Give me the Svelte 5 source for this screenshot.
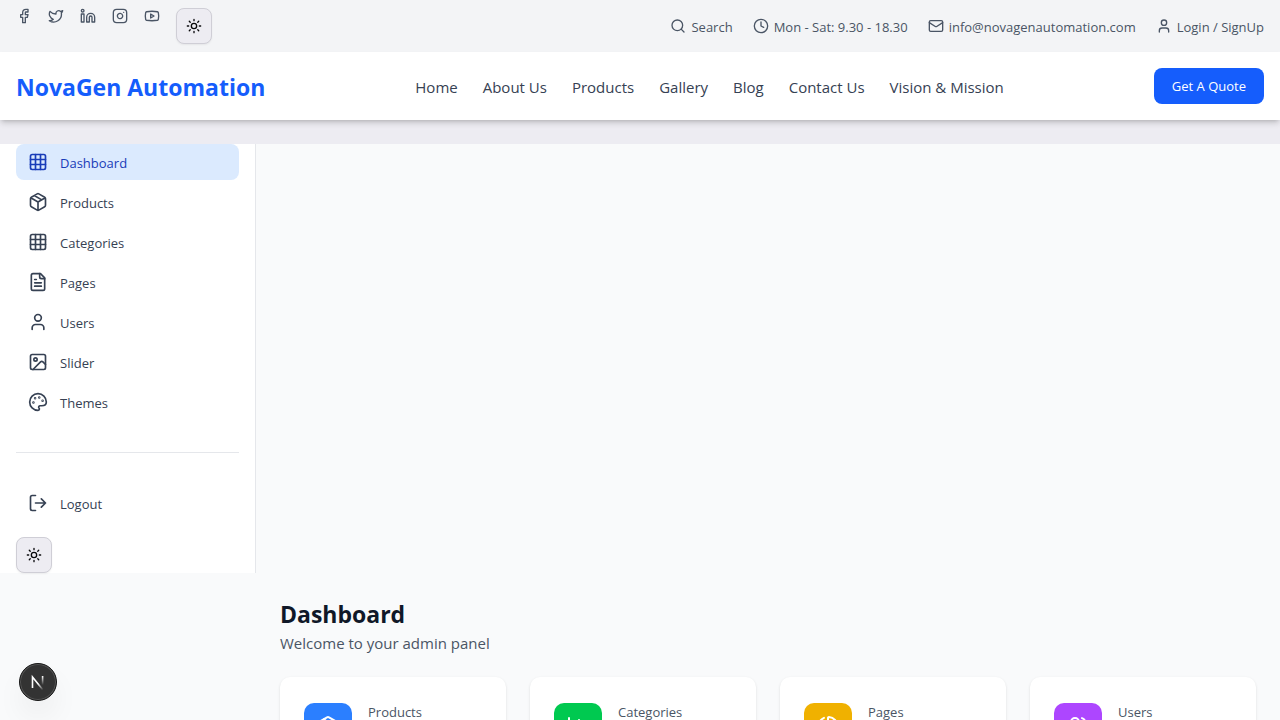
<script>
  const icons = {
    facebook: '<path d="M18 2h-3a5 5 0 0 0-5 5v3H7v4h3v8h4v-8h3l1-4h-4V7a1 1 0 0 1 1-1h3z"/>',
    twitter: '<path d="M22 4s-.7 2.1-2 3.4c1.6 10-9.4 17.3-18 11.6 2.2.1 4.4-.6 6-2C3 15.5.5 9.600 3 5c2.200 2.600 5.600 4.100 9 4-.9-4.200 4-6.600 7-3.800 1.100 0 3-1.200 3-1.200z"/>',
    linkedin: '<path d="M16 8a6 6 0 0 1 6 6v7h-4v-7a2 2 0 0 0-4 0v7h-4v-7a6 6 0 0 1 6-6z"/><rect width="4" height="12" x="2" y="9"/><circle cx="4" cy="4" r="2"/>',
    instagram: '<rect width="20" height="20" x="2" y="2" rx="5"/><path d="M16 11.370A4 4 0 1 1 12.630 8 4 4 0 0 1 16 11.370zM17.500 6.500h.01"/>',
    youtube: '<path d="M2.500 17a24.120 24.120 0 0 1 0-10 2 2 0 0 1 1.400-1.400 49.560 49.560 0 0 1 16.200 0A2 2 0 0 1 21.500 7a24.120 24.120 0 0 1 0 10 2 2 0 0 1-1.400 1.400 49.550 49.550 0 0 1-16.200 0A2 2 0 0 1 2.500 17"/><path d="m10 15 5-3-5-3z"/>',
    sun: '<circle cx="12" cy="12" r="4"/><path d="M12 2v2M12 20v2M4.930 4.930l1.410 1.410M17.660 17.660l1.410 1.410M2 12h2M20 12h2M6.340 17.660l-1.410 1.410M19.070 4.930l-1.410 1.410"/>',
    search: '<circle cx="11" cy="11" r="8"/><path d="m21 21-4.300-4.300"/>',
    clock: '<circle cx="12" cy="12" r="10"/><path d="M12 6v6l4 2"/>',
    mail: '<rect width="20" height="16" x="2" y="4" rx="2"/><path d="m22 7-8.970 5.700a1.940 1.940 0 0 1-2.060 0L2 7"/>',
    user: '<path d="M19 21v-2a4 4 0 0 0-4-4H9a4 4 0 0 0-4 4v2"/><circle cx="12" cy="7" r="4"/>',
    grid: '<rect width="18" height="18" x="3" y="3" rx="2"/><path d="M3 9h18M3 15h18M9 3v18M15 3v18"/>',
    box: '<path d="M11 21.730a2 2 0 0 0 2 0l7-4A2 2 0 0 0 21 16V8a2 2 0 0 0-1-1.730l-7-4a2 2 0 0 0-2 0l-7 4A2 2 0 0 0 3 8v8a2 2 0 0 0 1 1.730zM12 22V12M3.300 7 12 12l8.700-5M7.500 4.270l9 5.150"/>',
    file: '<path d="M15 2H6a2 2 0 0 0-2 2v16a2 2 0 0 0 2 2h12a2 2 0 0 0 2-2V7z"/><path d="M14 2v4a2 2 0 0 0 2 2h4M10 9H8M16 13H8M16 17H8"/>',
    image: '<rect width="18" height="18" x="3" y="3" rx="2"/><circle cx="9" cy="9" r="2"/><path d="m21 15-3.090-3.090a2 2 0 0 0-2.820 0L6 21"/>',
    palette: '<path d="M12 22a10 10 0 1 1 10-10c0 3.100-2.500 4.500-5.500 4.500h-2a1.700 1.700 0 0 0-1.300 2.800c.3.300.5.700.5 1.200 0 .9-.7 1.500-1.700 1.500z"/><circle cx="13.500" cy="6.500" r=".5"/><circle cx="17.500" cy="10.500" r=".5"/><circle cx="8.500" cy="7.500" r=".5"/><circle cx="6.500" cy="12.500" r=".5"/>',
    logout: '<path d="M9 21H5a2 2 0 0 1-2-2V5a2 2 0 0 1 2-2h4M16 17l5-5-5-5M21 12H9"/>',
    chart: '<path d="M3 3v16a2 2 0 0 0 2 2h16M18 17V9M13 17V5M8 17v-3"/>',
    pie: '<path d="M21 12c.552 0 1.005-.449.95-.998a10 10 0 0 0-8.953-8.951c-.55-.055-.998.398-.998.95v8a1 1 0 0 0 1 1z"/><path d="M21.210 15.890A10 10 0 1 1 8 2.830"/>',
    users: '<path d="M16 21v-2a4 4 0 0 0-4-4H6a4 4 0 0 0-4 4v2"/><circle cx="9" cy="7" r="4"/><path d="M22 21v-2a4 4 0 0 0-3-3.870M16 3.130a4 4 0 0 1 0 7.750"/>'
  };
  const socials = ['facebook', 'twitter', 'linkedin', 'instagram', 'youtube'];
  const nav = ['Home', 'About Us', 'Products', 'Gallery', 'Blog', 'Contact Us', 'Vision & Mission'];
  const menu = [
    ['grid', 'Dashboard'], ['box', 'Products'], ['grid', 'Categories'], ['file', 'Pages'],
    ['user', 'Users'], ['image', 'Slider'], ['palette', 'Themes']
  ];
  const stats = [
    ['box', 'Products', 'blue'], ['chart', 'Categories', 'green'],
    ['pie', 'Pages', 'amber'], ['users', 'Users', 'purple']
  ];
</script>

{#snippet icon(name, size)}
  <svg class="icon" width={size} height={size} viewBox="0 0 24 24" aria-hidden="true">{@html icons[name]}</svg>
{/snippet}

<div class="topbar">
  <div class="socials">
    {#each socials as s}
      <a href="#{s}" aria-label={s}>{@render icon(s, 16)}</a>
    {/each}
    <button class="theme" aria-label="Toggle theme">{@render icon('sun', 16)}</button>
  </div>
  <div class="contact">
    <a class="item" href="#search">{@render icon('search', 16)}<span>Search</span></a>
    <div class="item">{@render icon('clock', 16)}<span>Mon - Sat: 9.30 - 18.30</span></div>
    <a class="item" href="#mail">{@render icon('mail', 16)}<span>info@novagenautomation.com</span></a>
    <a class="item" href="#login">{@render icon('user', 16)}<span>Login / SignUp</span></a>
  </div>
</div>

<header>
  <a class="brand" href="#home">NovaGen Automation</a>
  <nav>
    {#each nav as item}<a href="#{item}">{item}</a>{/each}
  </nav>
  <button class="quote">Get A Quote</button>
</header>

<div class="shell">
  <aside>
    <nav class="menu">
      {#each menu as [glyph, label], i}
        <a class="entry" class:active={i === 0} href="#{label}">{@render icon(glyph, 20)}<span>{label}</span></a>
      {/each}
    </nav>
    <hr />
    <button class="entry">{@render icon('logout', 20)}<span>Logout</span></button>
    <button class="theme" aria-label="Toggle theme">{@render icon('sun', 16)}</button>
  </aside>
  <main>
    <h1>Dashboard</h1>
    <p class="lead">Welcome to your admin panel</p>
    <div class="cards">
      {#each stats as [glyph, label, tone]}
        <section class="card">
          <div class="tile {tone}">{@render icon(glyph, 24)}</div>
          <p class="label">{label}</p>
        </section>
      {/each}
    </div>
  </main>
</div>

<button class="badge" aria-label="Open dev tools">
  <svg width="38" height="38" viewBox="0 0 38 38" fill="none" aria-hidden="true">
    <defs>
      <linearGradient id="diag" x1="20" y1="20" x2="25" y2="26" gradientUnits="userSpaceOnUse">
        <stop stop-color="#fff" /><stop offset="1" stop-color="#fff" stop-opacity="0" />
      </linearGradient>
      <linearGradient id="stem" x1="0" y1="13" x2="0" y2="22" gradientUnits="userSpaceOnUse">
        <stop stop-color="#fff" /><stop offset="1" stop-color="#fff" stop-opacity="0" />
      </linearGradient>
    </defs>
    <path d="M13.500 25V14L24 27" stroke="url(#diag)" stroke-width="1.600" />
    <rect x="22.800" y="13" width="1.600" height="10" fill="url(#stem)" />
  </svg>
</button>

<style>
  :global(body) {
    margin: 0;
    background: #edecf2;
    font-family: "Open Sans", "Noto Sans", sans-serif;
    color: #364153;
  }
  * { box-sizing: border-box; }
  a { color: inherit; text-decoration: none; }
  button { font: inherit; color: inherit; border: 0; padding: 0; background: none; cursor: pointer; }
  p, h1 { margin: 0; }
  .icon {
    display: block;
    flex: none;
    fill: none;
    stroke: currentColor;
    stroke-width: 2;
    stroke-linecap: round;
    stroke-linejoin: round;
  }
  .topbar {
    display: flex;
    justify-content: space-between;
    padding: 8px 16px;
    background: #f3f4f6;
    color: #4a5565;
    font-size: 13px;
    line-height: 20px;
  }
  .socials { display: flex; gap: 16px; align-items: flex-start; }
  .contact { display: flex; gap: 20px; align-items: center; }
  .item { display: flex; gap: 5px; align-items: center; }
  .item span { padding-top: 2px; }
  .theme {
    display: flex;
    align-items: center;
    justify-content: center;
    width: 36px;
    height: 36px;
    border: 1px solid #cfced6;
    border-radius: 8px;
    background: #edecf2;
    color: #09090b;
    box-shadow: 0 1px 2px rgb(0 0 0 / 0.06);
  }
  header {
    position: relative;
    display: flex;
    justify-content: space-between;
    align-items: center;
    padding: 16px;
    background: #fff;
    box-shadow: 0 4px 6px -1px rgb(0 0 0 / 0.16), 0 2px 4px -2px rgb(0 0 0 / 0.16);
  }
  .brand { padding-top: 2px; color: #155dfc; font-size: 23px; line-height: 32px; font-weight: 700; }
  header nav { display: flex; gap: 25px; padding-top: 2px; font-size: 15px; line-height: 24px; }
  .quote {
    height: 36px;
    padding: 0 18px;
    border-radius: 8px;
    background: #155dfc;
    color: #fff;
    font-size: 13px;
  }
  .shell { margin-top: 24px; background: #f9fafb; }
  aside {
    display: flex;
    flex-direction: column;
    width: 256px;
    padding: 0 16px;
    background: #fff;
    border-right: 1px solid #e5e7eb;
  }
  .menu { display: flex; flex-direction: column; gap: 4px; }
  .entry {
    display: flex;
    align-items: flex-start;
    gap: 12px;
    height: 36px;
    padding: 8px 12px;
    border-radius: 8px;
    font-size: 13px;
    line-height: 22px;
  }
  .entry .icon, .entry :global(svg) { width: 20px; }
  .active { background: #dbeafe; color: #193cb8; }
  hr { width: 100%; margin: 32px 0; border: 0; border-top: 1px solid #e5e7eb; }
  aside .theme { margin-top: 16px; }
  main { margin-left: 256px; padding: 24px; }
  h1 { color: #101828; font-size: 23px; line-height: 34px; font-weight: 700; }
  .lead { color: #4a5565; font-size: 15px; line-height: 24px; }
  .cards { display: grid; grid-template-columns: repeat(4, 1fr); gap: 24px; margin-top: 22px; }
  .card {
    display: flex;
    gap: 16px;
    min-height: 100px;
    padding: 24px;
    border-radius: 10px;
    background: #fff;
    box-shadow: 0 1px 3px rgb(0 0 0 / 0.1), 0 1px 2px -1px rgb(0 0 0 / 0.1);
  }
  .tile { align-self: center; padding: 12px; border-radius: 10px; color: #fff; }
  .blue { background: #2b7fff; }
  .green { background: #00c950; }
  .amber { background: #f0b100; }
  .purple { background: #ad46ff; }
  .label { color: #4a5565; font-size: 13px; line-height: 22px; }
  .badge {
    position: fixed;
    left: 19px;
    bottom: 19px;
    width: 38px;
    height: 38px;
    border: 1px solid #171717;
    border-radius: 50%;
    background: #333;
    box-shadow: inset 0 0 0 1px #555, 0 16px 32px -8px rgb(0 0 0 / 0.14);
  }
  .badge svg { display: block; margin: -1px; }
</style>
